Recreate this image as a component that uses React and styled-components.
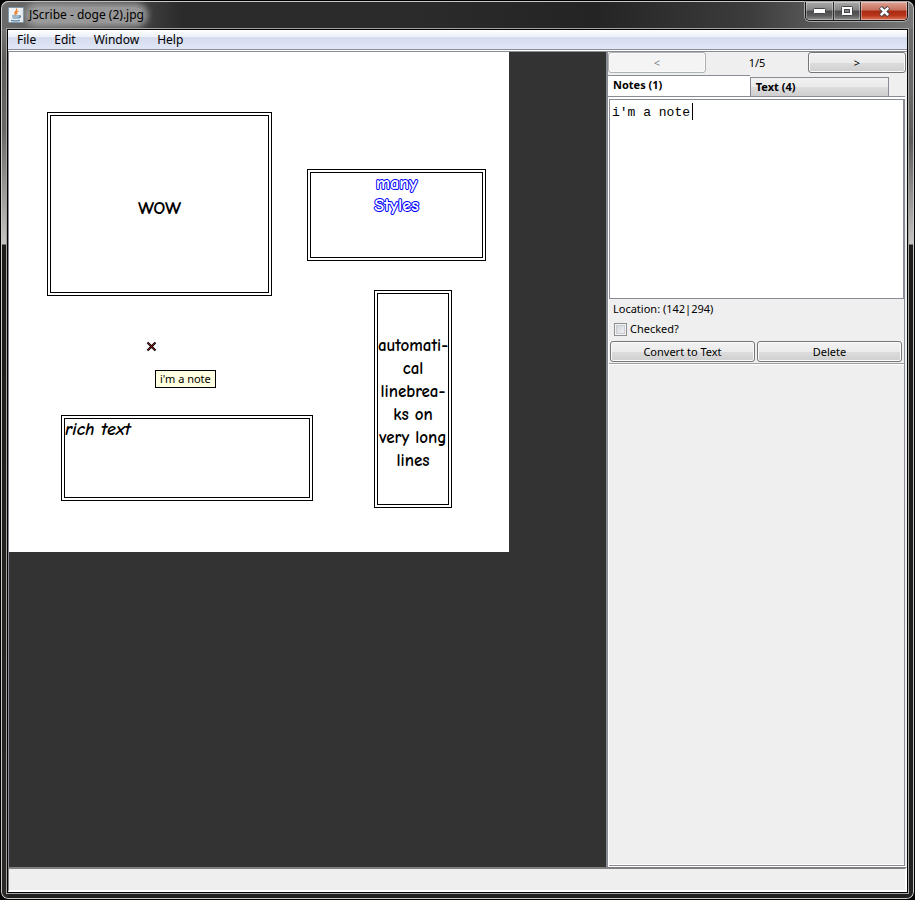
import React, { useState } from "react";
import styled, { createGlobalStyle, css } from "styled-components";

const uiFont = '"Noto Sans", "Open Sans", sans-serif';
const comicFont = '"Comic Sans MS", "Comic Neue", Lato, sans-serif';
const line = "#898c95";

const GlobalStyle = createGlobalStyle`
  *, *::before, *::after { box-sizing: border-box; }
  body { margin: 0; background: #000; font: 11px/14px ${uiFont}; color: #000; }
  button, input, textarea { font: inherit; color: inherit; margin: 0; }
`;

const Frame = styled.div`
  display: flex;
  flex-direction: column;
  min-height: 100vh;
  padding: 0 6px 6px;
  border: 1px solid #000;
  border-radius: 8px;
  box-shadow: inset 0 0 0 1px #c9c8c5;
  background:
    linear-gradient(#8c8c8c 0, #5c5b5a 60px, #6a6866 130px, #c6c4c1 243px, #1c1b1a 244px, #2a2928 100%) left / 7px 100% no-repeat,
    linear-gradient(#6c6c6c 0, #6a6a6a 90px, #5c5a59 140px, #c6c4c3 243px, #1c1b1a 244px, #222 100%) right / 7px 100% no-repeat,
    #20201f;
`;

const TitleBar = styled.header`
  display: flex;
  justify-content: space-between;
  align-items: flex-start;
  height: 28px;
  margin: 0 -5px;
  padding: 0 5px 0 6px;
  border-top: 1px solid #c9c8c5;
  border-radius: 7px 7px 0 0;
  background: linear-gradient(90deg, #6a6a6a 0, #4c4c4c 120px, #2b2b2b 180px, #2b2b2b 45%, #242424 65%, #3c3c3c 82%, #5b5b5b 90%, #777 100%);
`;

const Title = styled.h1`
  display: flex;
  align-items: center;
  gap: 5px;
  height: 26px;
  margin: 0;
  font-size: 12px;
  font-weight: 400;
  line-height: 16px;
`;

const TitleText = styled.span`
  border-radius: 8px;
  background: rgba(164, 164, 164, 0.85);
  box-shadow: 0 0 6px 4px rgba(164, 164, 164, 0.85);
`;

const WindowButtons = styled.div`
  display: flex;
  height: 19px;
  border: 1px solid #15151a;
  border-top: 0;
  border-radius: 0 0 5px 5px;
  box-shadow: 0 0 0 1px #a9a9a9;
  overflow: hidden;
`;

const WindowButton = styled.button`
  display: flex;
  align-items: center;
  justify-content: center;
  width: ${(p) => (p.$close ? 47 : 27)}px;
  padding: 0;
  border: 0;
  border-left: ${(p) => (p.$first ? "0" : "1px solid #2b2b2b")};
  background: ${(p) =>
    p.$close
      ? "linear-gradient(#dca194 0, #c76f5d 45%, #a92a12 50%, #b8371c 75%, #dc7a5a 100%)"
      : "linear-gradient(#a9a9a9 0, #858585 45%, #4b4b4b 50%, #5c5c5c 75%, #8e8e8e 100%)"};
  box-shadow: inset 0 0 0 1px rgba(255, 255, 255, 0.35);
`;

const Client = styled.div`
  display: flex;
  flex: 1;
  flex-direction: column;
  border: 1px solid #000;
  outline: 1px solid #a5a5a3;
  background: #fff;
`;

const MenuBar = styled.nav`
  display: flex;
  flex: none;
  height: 20px;
  border-bottom: 1px solid #8c8f99;
  background: linear-gradient(#fff 0, #edf0f8 35%, #d4dbee 40%, #e1e7f6 100%);
`;

const MenuItem = styled.button`
  padding: 0 9px;
  border: 0;
  background: none;
  font-size: 12px;
`;

const Body = styled.main`
  display: flex;
  flex: 1;
  margin-top: 1px;
  border-top: 1px solid ${line};
`;

const Desk = styled.section`
  flex: 1;
  border-left: 1px solid ${line};
  border-right: 1px solid ${line};
  background: #333;
`;

const Page = styled.div`
  position: relative;
  width: 500px;
  height: 500px;
  background: #fff;
`;

const TextFrame = styled.div`
  position: absolute;
  display: flex;
  flex-direction: column;
  align-items: center;
  justify-content: center;
  left: ${(p) => p.$x}px;
  top: ${(p) => p.$y}px;
  width: ${(p) => p.$w}px;
  height: ${(p) => p.$h}px;
  padding-top: 8px;
  border: 4px double #000;
  font: 700 ${(p) => p.$size || 18}px/23px ${comicFont};
  text-align: center;
  white-space: nowrap;
  ${(p) =>
    p.$outlined &&
    css`
      justify-content: flex-start;
      padding-top: 0;
      color: #fff;
      line-height: 22px;
      -webkit-text-stroke: 2px #00f;
      paint-order: stroke fill;
    `}
  ${(p) =>
    p.$rich &&
    css`
      justify-content: flex-start;
      align-items: flex-start;
      padding-top: 0;
      font-style: italic;
      line-height: 21px;
    `}
`;

const Marker = styled.svg`
  position: absolute;
  left: 137px;
  top: 289px;
`;

const Tooltip = styled.div`
  position: absolute;
  left: 146px;
  top: 318px;
  padding: 0 4px;
  border: 1px solid #000;
  background: #ffffe1;
  line-height: 16px;
`;

const Side = styled.aside`
  display: flex;
  flex-direction: column;
  width: 300px;
  padding-right: 1px;
  border-left: 1px solid ${line};
  background: #efefef;
`;

const Pager = styled.div`
  display: grid;
  grid-template-columns: repeat(3, 1fr);
  gap: 2px;
  align-items: center;
  text-align: center;
`;

const PushButton = styled.button`
  height: 21px;
  padding: 0;
  border: 1px solid #777;
  border-radius: 3px;
  box-shadow: inset 0 0 0 1px #fafafa;
  background: linear-gradient(#f2f2f2 0, #ebebeb 50%, #dddddd 52%, #cfcfcf 100%);
  &:disabled {
    color: #868686;
    border-color: #adb2b5;
    background: #f4f4f4;
  }
`;

const Tabs = styled.div`
  display: flex;
  align-items: flex-end;
  height: 22px;
  margin-top: 2px;
  padding-right: 17px;
`;

const Tab = styled.button`
  flex: ${(p) => (p.$active ? 143 : 138)} 1 0;
  height: ${(p) => (p.$active ? 22 : 20)}px;
  padding: ${(p) => (p.$active ? "0 5px 2px" : "0 5px")};
  border: 1px solid ${line};
  border-left-width: ${(p) => (p.$active ? 0 : 1)}px;
  border-right-width: ${(p) => (p.$active ? 0 : 1)}px;
  border-bottom-color: ${(p) => (p.$active ? "#fff" : line)};
  background: ${(p) => (p.$active ? "#fff" : "linear-gradient(#f2f2f2 0, #ebebeb 48%, #dddddd 52%, #cfcfcf 100%)")};
  font-weight: 700;
  text-align: left;
`;

const TabPanel = styled.div`
  display: flex;
  flex: 1;
  flex-direction: column;
  margin-top: -1px;
  margin-right: 1px;
  padding: 2px 0 1px 1px;
  border-top: 1px solid ${line};
  background: #fff;
`;

const PanelInner = styled.div`
  display: flex;
  flex: 1;
  flex-direction: column;
  border-right: 1px solid ${line};
  border-bottom: 1px solid ${line};
  background: #efefef;
`;

const NoteField = styled.div`
  position: relative;
`;

const NoteInput = styled.textarea`
  display: block;
  width: 100%;
  height: 200px;
  padding: 5px 2px;
  border: 1px solid ${line};
  border-radius: 0;
  outline: 0;
  resize: none;
  background: #fff;
  font: 13px/16px "Liberation Mono", monospace;
`;

const Caret = styled.span`
  position: absolute;
  left: 83px;
  top: 4px;
  width: 1px;
  height: 17px;
  background: #000;
`;

const Details = styled.div`
  display: flex;
  flex-direction: column;
  gap: 6px;
  padding: 3px 0 5px 4px;
`;

const CheckLabel = styled.label`
  display: flex;
  align-items: center;
  gap: 3px;
  padding-left: 1px;
`;

const CheckBox = styled.input`
  appearance: none;
  width: 13px;
  height: 13px;
  border: 1px solid #8e8f8f;
  background: linear-gradient(135deg, #cbcfd5, #f6f6f6);
  box-shadow: inset 0 0 0 1px #f4f4f4, inset 0 0 0 2px #c9ccd2;
`;

const Actions = styled.div`
  display: grid;
  grid-template-columns: 1fr 1fr;
  gap: 2px;
  padding: 0 2px 0 1px;
`;

const Rest = styled.div`
  flex: 1;
  margin-top: 1px;
  border-top: 1px solid #a0a0a0;
  border-bottom: 1px solid #fff;
  box-shadow: inset 0 1px 0 #fff;
`;

const StatusBar = styled.footer`
  height: 25px;
  border: 1px solid #808080;
  border-top-width: 2px;
  border-right: 2px solid #fff;
  border-bottom: 2px solid #fff;
  background: #efefef;
`;

const JavaIcon = () => (
  <svg width="16" height="16" viewBox="0 0 16 16" aria-hidden="true">
    <rect x=".5" y=".5" width="15" height="15" rx="1" fill="#eef3f7" stroke="#8196a8" />
    <path d="M8.500 1.500C10 4 5 5 7.500 8M10.500 4C8 5 8 6 9 7.500" fill="none" stroke="#e9802b" strokeWidth="1.300" />
    <path d="M4 9h6.500M4.500 11h5.500M3 13.300q4.500 1.200 9 0M10.500 9q3-.6 1.500 1.300l-2 1" fill="none" stroke="#4f7c9f" strokeWidth="1.200" />
  </svg>
);

export default function App() {
  const [note, setNote] = useState("i'm a note");
  return (
    <>
      <GlobalStyle />
      <Frame>
        <TitleBar>
          <Title>
            <JavaIcon />
            <TitleText>JScribe - doge (2).jpg</TitleText>
          </Title>
          <WindowButtons>
            <WindowButton $first aria-label="Minimize">
              <svg width="13" height="6" viewBox="0 0 13 6">
                <rect x=".5" y=".5" width="12" height="5" rx="1" fill="#fff" stroke="#45464e" />
              </svg>
            </WindowButton>
            <WindowButton aria-label="Maximize">
              <svg width="12" height="10" viewBox="0 0 12 10">
                <rect x=".5" y=".5" width="11" height="9" rx="1" fill="#fff" stroke="#45464e" />
                <rect x="3.500" y="3.500" width="5" height="3" fill="#858585" stroke="#45464e" />
              </svg>
            </WindowButton>
            <WindowButton $close aria-label="Close">
              <svg width="13" height="11" viewBox="0 0 13 11">
                <path d="M2.500 1.500l8 8M10.500 1.500l-8 8" stroke="#45464e" strokeWidth="4.500" />
                <path d="M2.800 1.800l7.400 7.400M10.200 1.800l-7.400 7.400" stroke="#fff" strokeWidth="2.600" />
              </svg>
            </WindowButton>
          </WindowButtons>
        </TitleBar>
        <Client>
          <MenuBar>
            <MenuItem>File</MenuItem>
            <MenuItem>Edit</MenuItem>
            <MenuItem>Window</MenuItem>
            <MenuItem>Help</MenuItem>
          </MenuBar>
          <Body>
            <Desk>
              <Page>
                <TextFrame $x={38} $y={60} $w={225} $h={184} $size={19}>WOW</TextFrame>
                <TextFrame $x={298} $y={117} $w={179} $h={92} $outlined>
                  <span>many</span>
                  <span>Styles</span>
                </TextFrame>
                <TextFrame $x={365} $y={238} $w={78} $h={218} $size={17}>
                  <span>automati-</span>
                  <span>cal</span>
                  <span>linebrea-</span>
                  <span>ks on</span>
                  <span>very long</span>
                  <span>lines</span>
                </TextFrame>
                <TextFrame $x={52} $y={363} $w={252} $h={86} $rich>rich text</TextFrame>
                <Marker width="11" height="11" viewBox="0 0 11 11">
                  <path d="M1.500 1.500l8 8M9.500 1.500l-8 8" stroke="#000" strokeWidth="2.200" />
                  <path d="M2 2l7 7M9 2l-7 7" stroke="#c02020" strokeWidth=".7" />
                </Marker>
                <Tooltip role="tooltip">i'm a note</Tooltip>
              </Page>
            </Desk>
            <Side>
              <Pager>
                <PushButton disabled>&lt;</PushButton>
                <span>1/5</span>
                <PushButton>&gt;</PushButton>
              </Pager>
              <Tabs role="tablist">
                <Tab role="tab" aria-selected="true" $active>Notes (1)</Tab>
                <Tab role="tab" aria-selected="false">Text (4)</Tab>
              </Tabs>
              <TabPanel role="tabpanel">
                <PanelInner>
                  <NoteField>
                    <NoteInput aria-label="Note" value={note} onChange={(e) => setNote(e.target.value)} spellCheck={false} />
                    <Caret />
                  </NoteField>
                  <Details>
                    <span>Location: (142|294)</span>
                    <CheckLabel>
                      <CheckBox type="checkbox" />
                      Checked?
                    </CheckLabel>
                  </Details>
                  <Actions>
                    <PushButton>Convert to Text</PushButton>
                    <PushButton>Delete</PushButton>
                  </Actions>
                  <Rest />
                </PanelInner>
              </TabPanel>
            </Side>
          </Body>
          <StatusBar />
        </Client>
      </Frame>
    </>
  );
}
